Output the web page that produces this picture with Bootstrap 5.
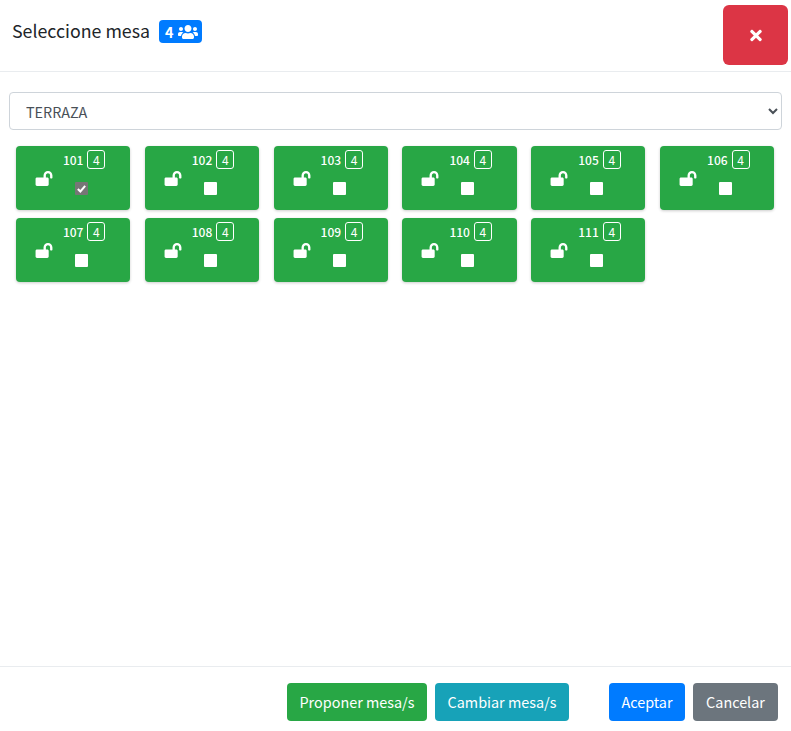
<!DOCTYPE html>
<html lang="es">

<head>
  <meta charset="UTF-8" />
  <title>Seleccione mesa</title>
  <meta name="viewport" content="width=device-width, initial-scale=1" />
  <link href="https://cdn.jsdelivr.net/npm/bootstrap@5.3.0/dist/css/bootstrap.min.css" rel="stylesheet" />
  <style>
    body {
      font-family: "Noto Sans CJK JP", "Noto Sans", sans-serif;
      color: #212529;
      min-height: 100vh;
      display: flex;
      flex-direction: column;
    }

    .top-bar {
      height: 72px;
      padding: 5px 3px 6px 12px;
      border-bottom: 1px solid #e9ecef;
    }

    .top-left {
      height: 52px;
    }

    .top-title {
      font-size: 17.8px;
      line-height: 24px;
      margin: 0 9px 3px 0;
      font-weight: 400;
    }

    .people-tag {
      background: #007bff;
      color: #fff;
      border-radius: 4px;
      height: 23px;
      width: 43px;
      padding-left: 6px;
      margin-top: 1px;
      font-size: 14.4px;
      font-weight: 700;
    }

    .people-tag svg {
      width: 20px;
      height: 16px;
      fill: #fff;
    }

    .close-btn {
      width: 65px;
      height: 60px;
      background: #dc3545;
      border: 0;
      border-radius: 6px;
    }

    .close-btn svg {
      width: 12px;
      height: 17px;
      fill: #fff;
    }

    .main-area {
      flex: 1;
      padding: 20px 9px 0;
    }

    .zone-select {
      display: block;
      width: 100%;
      height: 38px;
      color: #495057;
      background: #fff;
      border: 1px solid #ced4da;
      border-radius: 4px;
      font-size: 14.4px;
      font-family: inherit;
      padding: 6px 12px;
    }

    .table-grid {
      display: grid;
      grid-template-columns: repeat(6, 1fr);
      row-gap: 8px;
      margin-top: 16px;
    }

    .table-cell {
      padding: 0 7.8px 0 6.9px;
    }

    .table-tile {
      height: 64px;
      background: #28a745;
      color: #fff;
      border-radius: 4px;
      box-shadow: 0 1px 3px rgba(0, 0, 0, .2);
      padding-left: 19px;
    }

    .lock-icon {
      width: 18px;
      height: 15px;
      fill: #fff;
      margin-top: 25px;
      flex: none;
    }

    .tile-right {
      margin-left: 10px;
      padding-top: 4px;
    }

    .tile-num {
      font-size: 12px;
      line-height: 19px;
      font-weight: 500;
    }

    .tile-cap {
      display: inline-block;
      width: 18px;
      height: 19px;
      margin-left: 4px;
      border: 1px solid #fff;
      border-radius: 3px;
      text-align: center;
      font-size: 12px;
      line-height: 17px;
    }

    .tile-check {
      display: block;
      appearance: none;
      width: 13px;
      height: 13px;
      margin: 13px 0 0 12px;
      background: #fff no-repeat center / 11px 11px;
      border-radius: 1px;
    }

    .tile-check:checked {
      background-color: #767676;
      background-image: url("data:image/svg+xml,%3Csvg xmlns='http://www.w3.org/2000/svg' viewBox='0 0 12 12'%3E%3Cpath d='M2 6.5l2.8 2.8L10 3.2' fill='none' stroke='%23fff' stroke-width='2.2'/%3E%3C/svg%3E");
    }

    .bottom-bar {
      height: 65px;
      padding: 16px 13px 10px 0;
      border-top: 1px solid #e9ecef;
    }

    .bottom-bar .btn {
      height: 38px;
      font-size: 14.4px;
      line-height: 24px;
      border-radius: 4px;
      padding: 6px 0;
      border: 0;
      color: #fff;
    }

    .btn-propose {
      background: #28a745;
      width: 140px;
    }

    .btn-change {
      background: #17a2b8;
      width: 134px;
    }

    .btn-accept {
      background: #007bff;
      width: 76px;
      margin-left: 32px;
    }

    .btn-cancel {
      background: #6c757d;
      width: 85px;
    }
  </style>
</head>

<body>
  <div class="top-bar d-flex justify-content-between">
    <div class="top-left d-flex align-items-center">
      <h5 class="top-title">Seleccione mesa</h5>
      <span class="people-tag d-flex align-items-center gap-1">4
        <svg viewBox="0 0 640 512">
          <path d="M96 224c35.3 0 64-28.7 64-64s-28.7-64-64-64-64 28.7-64 64 28.7 64 64 64zm448 0c35.3 0 64-28.7 64-64s-28.7-64-64-64-64 28.7-64 64 28.7 64 64 64zm32 32h-64c-17.6 0-33.5 7.1-45.1 18.6 40.3 22.1 68.9 62 75.1 109.4h66c17.7 0 32-14.3 32-32v-32c0-35.3-28.7-64-64-64zm-256 0c61.9 0 112-50.1 112-112S381.9 32 320 32 208 82.1 208 144s50.1 112 112 112zm76.8 32h-8.3c-20.8 10-43.9 16-68.5 16s-47.6-6-68.5-16h-8.3C179.6 288 128 339.6 128 403.2V432c0 26.5 21.5 48 48 48h288c26.5 0 48-21.5 48-48v-28.8c0-63.6-51.6-115.2-115.2-115.2zm-223.7-13.4C161.5 263.1 145.6 256 128 256H64c-35.3 0-64 28.7-64 64v32c0 17.7 14.3 32 32 32h65.9c6.3-47.4 34.9-87.3 75.2-109.4z" />
        </svg>
      </span>
    </div>
    <button class="close-btn d-flex align-items-center justify-content-center" type="button">
      <svg viewBox="0 0 352 512">
        <path d="M242.72 256l100.07-100.07c12.28-12.28 12.28-32.19 0-44.48l-22.24-22.24c-12.28-12.28-32.19-12.28-44.48 0L176 189.28 75.93 89.21c-12.28-12.28-32.19-12.28-44.48 0L9.21 111.45c-12.28 12.28-12.28 32.19 0 44.48L109.28 256 9.21 356.07c-12.28 12.28-12.28 32.19 0 44.48l22.24 22.24c12.28 12.28 32.2 12.28 44.48 0L176 322.72l100.07 100.07c12.28 12.28 32.2 12.28 44.48 0l22.24-22.24c12.28-12.28 12.28-32.19 0-44.48L242.72 256z" />
      </svg>
    </button>
  </div>

  <div class="main-area">
    <select class="zone-select">
      <option>TERRAZA</option>
    </select>
    <div class="table-grid" id="mesas"></div>
  </div>

  <div class="bottom-bar d-flex justify-content-end gap-2">
    <button class="btn btn-propose" type="button">Proponer mesa/s</button>
    <button class="btn btn-change" type="button">Cambiar mesa/s</button>
    <button class="btn btn-accept" type="button">Aceptar</button>
    <button class="btn btn-cancel" type="button">Cancelar</button>
  </div>

  <script>
    // mesas de la terraza, la 101 ya marcada
    const lockPath = 'M423.5 0C339.5.3 272 69.5 272 153.5V224H48c-26.5 0-48 21.5-48 48v192c0 26.5 21.5 48 48 48h352c26.5 0 48-21.5 48-48V272c0-26.5-21.5-48-48-48h-48v-71.1c0-39.6 31.7-72.5 71.3-72.9 40-.4 72.7 32.1 72.7 72v80c0 13.3 10.7 24 24 24h32c13.3 0 24-10.7 24-24v-80C576 68 507.5-.3 423.5 0z';
    const grid = document.getElementById('mesas');
    for (let n = 101; n <= 111; n++) {
      grid.insertAdjacentHTML('beforeend', `
        <div class="table-cell">
          <div class="table-tile d-flex">
            <svg class="lock-icon" viewBox="0 0 576 512"><path d="${lockPath}" /></svg>
            <div class="tile-right">
              <div class="d-flex"><span class="tile-num">${n}</span><span class="tile-cap">4</span></div>
              <input class="tile-check" type="checkbox" disabled ${n === 101 ? 'checked' : ''} />
            </div>
          </div>
        </div>`);
    }
  </script>
  <script src="https://cdn.jsdelivr.net/npm/bootstrap@5.3.0/dist/js/bootstrap.bundle.min.js"></script>
</body>

</html>
